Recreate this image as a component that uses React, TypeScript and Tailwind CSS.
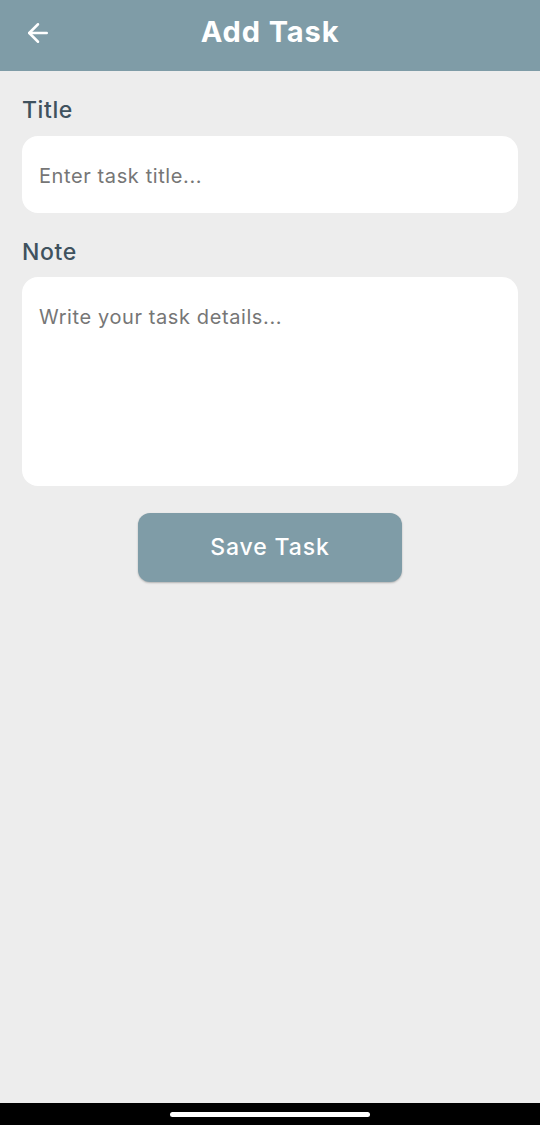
import { ArrowLeft } from 'lucide-react';

export default function App() {
  return (
    <div className="w-[540px] h-[1125px] flex flex-col bg-[#ededed] font-['Inter','Noto_Sans',sans-serif]">
      {/* Header */}
      <header className="h-[71px] bg-[#7f9ca7] flex items-center px-[23px] pb-[5px] relative shrink-0">
        <ArrowLeft className="w-[30px] h-[30px] text-white" strokeWidth={2} />
        <h1 className="absolute left-0 right-0 top-[14px] text-center text-white text-[29px] leading-[36px] font-bold tracking-[0.9px] pointer-events-none">
          Add Task
        </h1>
      </header>

      {/* Form */}
      <main className="flex-1 flex flex-col px-[22px] pt-[25px]">
        <label className="text-[23px] leading-[28px] font-medium text-[#3f525e] tracking-[0.6px] mb-[12px]">Title</label>
        <div className="h-[77px] bg-white rounded-[16px] flex items-center px-[17px] pt-[2px]">
          <span className="text-[20px] text-[#767676] tracking-[0.6px]">Enter task title...</span>
        </div>

        <label className="text-[23px] leading-[28px] font-medium text-[#3f525e] tracking-[0.6px] mt-[25px] mb-[11px]">Note</label>
        <div className="h-[209px] bg-white rounded-[16px] px-[17px] pt-[25px]">
          <span className="text-[20px] text-[#767676] tracking-[0.6px]">Write your task details...</span>
        </div>

        <div className="flex justify-center mt-[27px]">
          <button className="w-[264px] h-[69px] rounded-[12px] bg-[#7f9ca7] text-white text-[23px] font-medium tracking-[0.9px] shadow-[0_1px_2px_rgba(0,0,0,0.25)]">
            Save Task
          </button>
        </div>
      </main>

      {/* System nav bar */}
      <div className="h-[22px] bg-black flex items-center justify-center shrink-0">
        <div className="w-[200px] h-[5px] rounded-full bg-white" />
      </div>
    </div>
  );
}
